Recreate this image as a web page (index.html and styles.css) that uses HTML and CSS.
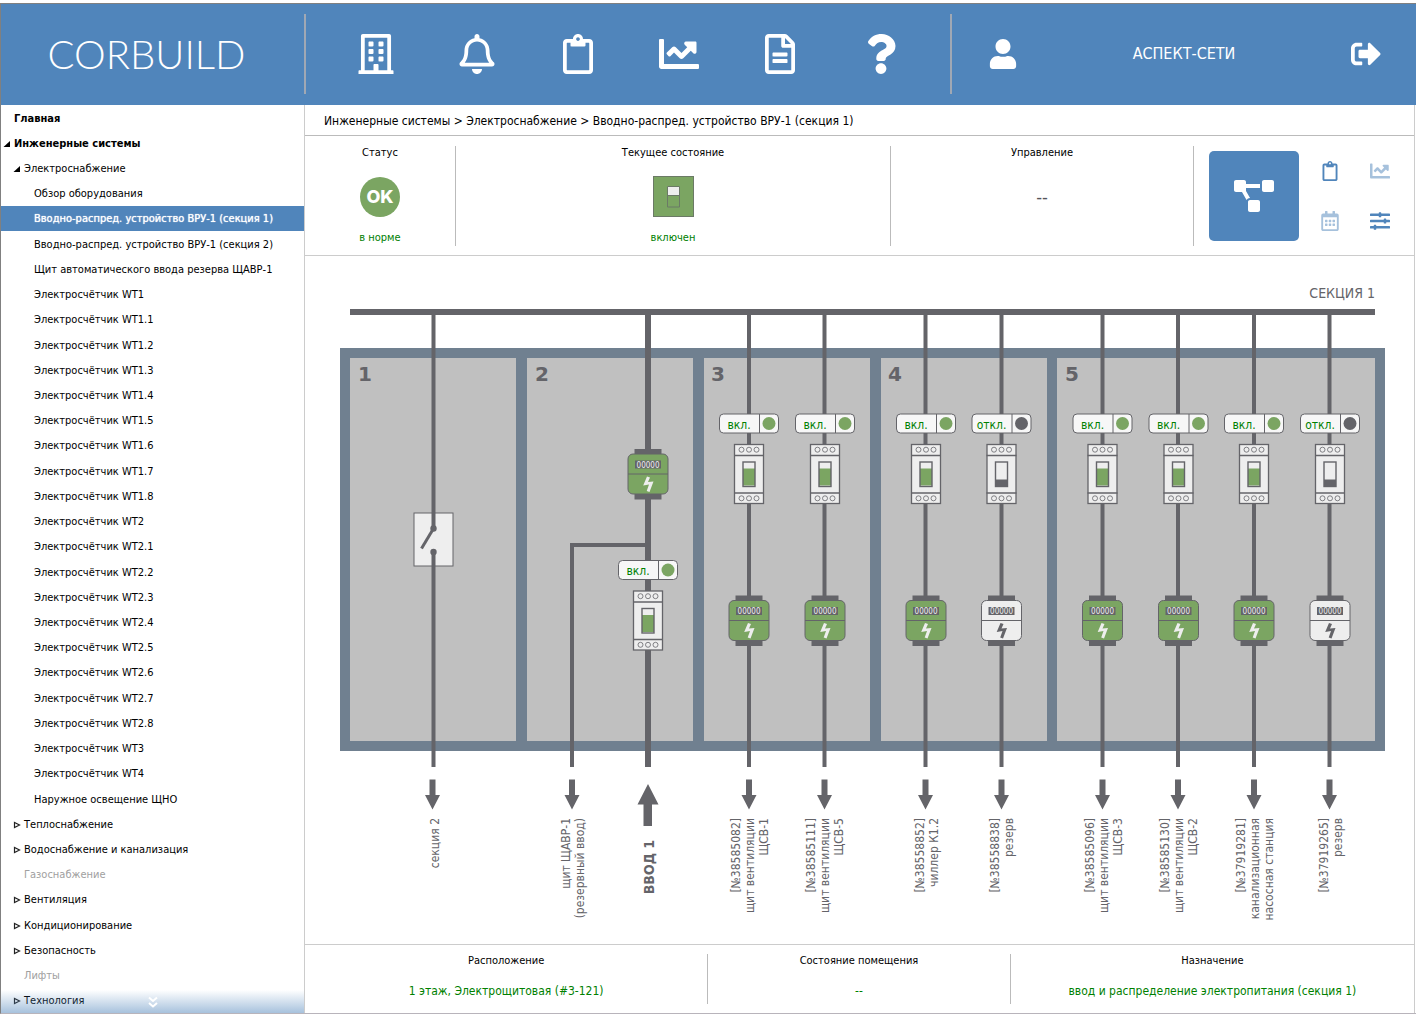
FILE: index.html
```html
<!DOCTYPE html>
<html lang="ru">

<head>
    <meta charset="UTF-8">
    <meta name="viewport" content="width=device-width, initial-scale=1.0">
    <title>CORBUILD</title>
    <link rel="stylesheet" href="styles.css">
</head>

<body>
    <!-- icons and diagram parts -->
    <svg class="sprite" width="0" height="0" aria-hidden="true">
        <defs>
            <symbol id="i-building" viewBox="0 0 448 512"><path d="M128 148v-40c0-6.600 5.400-12 12-12h40c6.600 0 12 5.400 12 12v40c0 6.600-5.400 12-12 12h-40c-6.600 0-12-5.400-12-12zm140 12h40c6.600 0 12-5.400 12-12v-40c0-6.600-5.400-12-12-12h-40c-6.600 0-12 5.400-12 12v40c0 6.600 5.400 12 12 12zm-128 96h40c6.600 0 12-5.400 12-12v-40c0-6.600-5.400-12-12-12h-40c-6.600 0-12 5.400-12 12v40c0 6.600 5.400 12 12 12zm128 0h40c6.600 0 12-5.400 12-12v-40c0-6.600-5.400-12-12-12h-40c-6.600 0-12 5.400-12 12v40c0 6.600 5.400 12 12 12zm-76 84v-40c0-6.600-5.400-12-12-12h-40c-6.600 0-12 5.400-12 12v40c0 6.600 5.400 12 12 12h40c6.600 0 12-5.400 12-12zm76 12h40c6.600 0 12-5.400 12-12v-40c0-6.600-5.400-12-12-12h-40c-6.600 0-12 5.400-12 12v40c0 6.600 5.400 12 12 12zm180 124v36H0v-36c0-6.600 5.400-12 12-12h19.500V24c0-13.300 10.700-24 24-24h337c13.300 0 24 10.700 24 24v440H436c6.600 0 12 5.400 12 12zM79.500 463H192v-67c0-6.600 5.400-12 12-12h40c6.600 0 12 5.400 12 12v67h112.500V49L80 48l-.5 415z"/></symbol>
            <symbol id="i-bell" viewBox="0 0 448 512"><path d="M439.390 362.290c-19.320-20.760-55.470-51.990-55.470-154.290 0-77.700-54.480-139.900-127.940-155.160V32c0-17.670-14.320-32-31.980-32s-31.980 14.330-31.980 32v20.840C118.560 68.100 64.080 130.300 64.080 208c0 102.300-36.150 133.530-55.470 154.290-6 6.450-8.660 14.160-8.610 21.710.11 16.400 12.980 32 32.100 32h383.800c19.120 0 32-15.600 32.100-32 .05-7.550-2.610-15.270-8.610-21.710zM67.530 368c21.220-27.970 44.420-74.330 44.530-159.420 0-.2-.06-.38-.06-.58 0-61.860 50.140-112 112-112s112 50.140 112 112c0 .2-.06.38-.06.58.11 85.100 23.310 131.460 44.530 159.420H67.530zM224 512c35.320 0 63.970-28.650 63.970-64H160.030c0 35.350 28.650 64 63.970 64z"/></symbol>
            <symbol id="i-clipboard" viewBox="0 0 384 512"><path d="M336 64h-80c0-35.300-28.700-64-64-64s-64 28.700-64 64H48C21.500 64 0 85.500 0 112v352c0 26.500 21.500 48 48 48h288c26.500 0 48-21.500 48-48V112c0-26.500-21.500-48-48-48zM192 40c13.300 0 24 10.700 24 24s-10.700 24-24 24-24-10.700-24-24 10.700-24 24-24zm144 418c0 3.300-2.700 6-6 6H54c-3.300 0-6-2.700-6-6V118c0-3.300 2.700-6 6-6h42v36c0 6.600 5.400 12 12 12h168c6.600 0 12-5.400 12-12v-36h42c3.300 0 6 2.700 6 6z"/></symbol>
            <symbol id="i-chart" viewBox="0 0 512 512"><path d="M496 384H64V80c0-8.840-7.160-16-16-16H16C7.160 64 0 71.160 0 80v336c0 17.670 14.330 32 32 32h464c8.840 0 16-7.160 16-16v-32c0-8.840-7.160-16-16-16zM464 96H345.940c-21.380 0-32.090 25.850-16.970 40.970l32.400 32.400L288 242.750l-73.370-73.370c-12.500-12.500-32.760-12.500-45.250 0l-68.690 68.690c-6.250 6.250-6.250 16.380 0 22.630l22.620 22.620c6.250 6.250 16.380 6.250 22.630 0L192 237.250l73.370 73.370c12.500 12.500 32.760 12.500 45.250 0l96-96 32.400 32.400c15.120 15.120 40.970 4.410 40.970-16.970V112c.01-8.840-7.150-16-15.990-16z"/></symbol>
            <symbol id="i-file" viewBox="0 0 384 512"><path d="M288 248v28c0 6.600-5.400 12-12 12H108c-6.600 0-12-5.400-12-12v-28c0-6.600 5.400-12 12-12h168c6.600 0 12 5.400 12 12zm-12 72H108c-6.600 0-12 5.400-12 12v28c0 6.600 5.400 12 12 12h168c6.600 0 12-5.400 12-12v-28c0-6.600-5.400-12-12-12zm108-188.100V464c0 26.500-21.500 48-48 48H48c-26.500 0-48-21.500-48-48V48C0 21.500 21.500 0 48 0h204.100C264.800 0 277 5.100 286 14.100L369.900 98c9 8.900 14.100 21.200 14.100 33.900zm-128-80V128h76.100L256 51.900zM336 464V176H232c-13.300 0-24-10.700-24-24V48H48v416h288z"/></symbol>
            <symbol id="i-question" viewBox="0 0 384 512"><path d="M202.021 0C122.202 0 70.503 32.703 29.914 91.026c-7.363 10.580-5.093 25.086 5.178 32.874l43.138 32.709c10.373 7.865 25.132 6.026 33.253-4.148 25.049-31.381 43.630-49.449 82.757-49.449 30.764 0 68.816 19.799 68.816 49.631 0 22.552-18.617 34.134-48.993 51.164-35.423 19.860-82.299 44.576-82.299 106.405V320c0 13.255 10.745 24 24 24h72.471c13.255 0 24-10.745 24-24v-5.773c0-42.860 125.268-44.645 125.268-160.627C377.504 66.256 286.902 0 202.021 0zM192 373.459c-38.196 0-69.271 31.075-69.271 69.271 0 38.195 31.075 69.270 69.271 69.270s69.271-31.075 69.271-69.271-31.075-69.270-69.271-69.270z"/></symbol>
            <symbol id="i-user" viewBox="0 0 448 512"><path d="M224 256c70.700 0 128-57.300 128-128S294.700 0 224 0 96 57.300 96 128s57.300 128 128 128zm89.600 32h-16.700c-22.200 10.200-46.900 16-72.900 16s-50.600-5.800-72.900-16h-16.700C60.200 288 0 348.200 0 422.400V464c0 26.500 21.500 48 48 48h352c26.500 0 48-21.500 48-48v-41.600c0-74.200-60.200-134.400-134.400-134.400z"/></symbol>
            <symbol id="i-exit" viewBox="0 0 512 512"><path d="M497 273L329 441c-15 15-41 4.500-41-17v-96H152c-13.300 0-24-10.700-24-24v-96c0-13.300 10.700-24 24-24h136V88c0-21.400 25.900-32 41-17l168 168c9.300 9.400 9.300 24.600 0 34zM192 436v-40c0-6.600-5.400-12-12-12H96c-17.700 0-32-14.300-32-32V160c0-17.700 14.300-32 32-32h84c6.600 0 12-5.400 12-12V76c0-6.600-5.400-12-12-12H96c-53 0-96 43-96 96v192c0 53 43 96 96 96h84c6.600 0 12-5.400 12-12z"/></symbol>
            <symbol id="i-diagram" viewBox="0 0 640 512"><path d="M384 320H256c-17.670 0-32 14.330-32 32v128c0 17.670 14.330 32 32 32h128c17.670 0 32-14.330 32-32V352c0-17.670-14.330-32-32-32zM192 32c0-17.670-14.330-32-32-32H32C14.330 0 0 14.330 0 32v128c0 17.670 14.330 32 32 32h95.720l73.160 128.040C211.980 300.980 232.400 288 256 288h.28L192 175.510V128h224V64H192V32zM608 0H480c-17.670 0-32 14.330-32 32v128c0 17.670 14.330 32 32 32h128c17.670 0 32-14.330 32-32V32c0-17.670-14.330-32-32-32z"/></symbol>
            <symbol id="i-calendar" viewBox="0 0 448 512"><path d="M148 288h-40c-6.600 0-12-5.400-12-12v-40c0-6.600 5.400-12 12-12h40c6.600 0 12 5.400 12 12v40c0 6.600-5.400 12-12 12zm108-12v-40c0-6.600-5.400-12-12-12h-40c-6.600 0-12 5.400-12 12v40c0 6.600 5.400 12 12 12h40c6.600 0 12-5.400 12-12zm96 0v-40c0-6.600-5.400-12-12-12h-40c-6.600 0-12 5.400-12 12v40c0 6.600 5.400 12 12 12h40c6.600 0 12-5.400 12-12zm-96 96v-40c0-6.600-5.400-12-12-12h-40c-6.600 0-12 5.400-12 12v40c0 6.600 5.400 12 12 12h40c6.600 0 12-5.400 12-12zm-96 0v-40c0-6.600-5.400-12-12-12h-40c-6.600 0-12 5.400-12 12v40c0 6.600 5.400 12 12 12h40c6.600 0 12-5.400 12-12zm192 0v-40c0-6.600-5.400-12-12-12h-40c-6.600 0-12 5.400-12 12v40c0 6.600 5.400 12 12 12h40c6.600 0 12-5.400 12-12zm96-260v352c0 26.500-21.500 48-48 48H48c-26.500 0-48-21.500-48-48V112c0-26.500 21.500-48 48-48h48V12c0-6.600 5.400-12 12-12h40c6.600 0 12 5.400 12 12v52h128V12c0-6.600 5.400-12 12-12h40c6.600 0 12 5.400 12 12v52h48c26.500 0 48 21.500 48 48zm-48 346V160H48v298c0 3.300 2.700 6 6 6h340c3.300 0 6-2.700 6-6z"/></symbol>
            <symbol id="i-sliders" viewBox="0 0 512 512"><path d="M496 384H160v-16c0-8.800-7.200-16-16-16h-32c-8.800 0-16 7.200-16 16v16H16c-8.800 0-16 7.200-16 16v32c0 8.800 7.200 16 16 16h80v16c0 8.800 7.200 16 16 16h32c8.800 0 16-7.200 16-16v-16h336c8.800 0 16-7.200 16-16v-32c0-8.800-7.200-16-16-16zm0-160h-80v-16c0-8.800-7.200-16-16-16h-32c-8.800 0-16 7.200-16 16v16H16c-8.800 0-16 7.200-16 16v32c0 8.800 7.200 16 16 16h336v16c0 8.800 7.200 16 16 16h32c8.800 0 16-7.200 16-16v-16h80c8.800 0 16-7.200 16-16v-32c0-8.800-7.200-16-16-16zm0-160H288V48c0-8.800-7.200-16-16-16h-32c-8.800 0-16 7.200-16 16v16H16C7.200 64 0 71.200 0 80v32c0 8.800 7.200 16 16 16h208v16c0 8.800 7.200 16 16 16h32c8.800 0 16-7.200 16-16v-16h208c8.800 0 16-7.200 16-16V80c0-8.800-7.200-16-16-16z"/></symbol>
            <symbol id="i-open" viewBox="0 0 8 8"><path d="M7 1v6H0.500z"/></symbol>
            <symbol id="i-closed" viewBox="0 0 8 8"><path d="M1.500 1.500v5L6.500 4z" fill="none" stroke="#222" stroke-width="1.200"/></symbol>
            <symbol id="i-more" viewBox="0 0 10 12"><path d="M1 1.500l4 3.500 4-3.500M1 7l4 3.500L9 7" fill="none" stroke="#fff" stroke-width="2"/></symbol>

            <g id="terminals">
                <rect x="-14.500" y="-29.500" width="29" height="59" fill="#eee" stroke="#646469" stroke-width="1.300"/>
                <path d="M-15-18.500h30M-15 19h30" stroke="#646469" stroke-width="1.300"/>
                <g fill="none" stroke="#646469" stroke-width=".8">
                    <circle cx="-7.500" cy="-24.300" r="2.500"/><circle cx="0" cy="-24.300" r="2.500"/><circle cx="7.500" cy="-24.300" r="2.500"/>
                    <circle cx="-7.500" cy="24.300" r="2.500"/><circle cx="0" cy="24.300" r="2.500"/><circle cx="7.500" cy="24.300" r="2.500"/>
                </g>
            </g>
            <g id="breaker-on">
                <use href="#terminals"/>
                <rect x="-6" y="-5.500" width="12" height="17" fill="#7ba562"/>
                <rect x="-6" y="-12" width="12" height="24.500" fill="none" stroke="#646469" stroke-width="1.400"/>
            </g>
            <g id="breaker-off">
                <use href="#terminals"/>
                <rect x="-6" y="5.500" width="12" height="6.500" fill="#646469"/>
                <rect x="-6" y="-12" width="12" height="24.500" fill="none" stroke="#646469" stroke-width="1.400"/>
            </g>
            <g id="meter">
                <path d="M-13.500-25.500h27v6h-27zM-13.500 19h27v6h-27z" fill="#646469"/>
                <rect x="-20" y="-20.500" width="40" height="40" rx="5" fill="currentColor" stroke="#646469"/>
                <path d="M-20-.5h40" stroke="#646469"/>
                <rect x="-13" y="-14" width="26" height="8" fill="#646469"/>
                <text class="digits" x="0" y="-7" text-anchor="middle">00000</text>
            </g>
            <path id="bolt" d="M-1 2l3 1-2 4.500 5.500-.5-4 10.500-2.800-1L1 10l-5.800 1z"/>
            <g id="meter-on" color="#7ba562">
                <use href="#meter"/>
                <use href="#bolt" fill="#eee"/>
            </g>
            <g id="meter-off" color="#eee">
                <use href="#meter"/>
                <use href="#bolt" fill="#646469"/>
            </g>
            <g id="badge">
                <rect x="-29.500" y="-9.500" width="59" height="19" rx="4" fill="#f7f7f7" stroke="#646469"/>
                <path d="M10.500-9.500v19" stroke="#646469"/>
                <circle cx="20" cy="0" r="6.500" fill="currentColor"/>
            </g>
            <g id="badge-on" color="#7ba562">
                <use href="#badge"/>
                <text class="state" x="-10" y="5" text-anchor="middle">вкл.</text>
            </g>
            <g id="badge-off" color="#646469">
                <use href="#badge"/>
                <text class="state" x="-10" y="5" text-anchor="middle">откл.</text>
            </g>
            <path id="arrow" d="M-3 0h6v15.500h4.500L0 30l-7.500-14.500H-3z" fill="#646469"/>
        </defs>
    </svg>

    <div class="app">
        <header class="top">
            <a class="logo" href="#">CORBUILD</a>
            <nav class="tools">
                <a href="#" aria-label="Здание"><svg class="icon"><use href="#i-building"/></svg></a>
                <a href="#" aria-label="События"><svg class="icon"><use href="#i-bell"/></svg></a>
                <a href="#" aria-label="Журнал"><svg class="icon"><use href="#i-clipboard"/></svg></a>
                <a href="#" aria-label="Графики"><svg class="icon"><use href="#i-chart"/></svg></a>
                <a href="#" aria-label="Документы"><svg class="icon"><use href="#i-file"/></svg></a>
                <a href="#" aria-label="Справка"><svg class="icon"><use href="#i-question"/></svg></a>
            </nav>
            <div class="account">
                <svg class="icon icon-md"><use href="#i-user"/></svg>
                <span>АСПЕКТ-СЕТИ</span>
                <button aria-label="Выход"><svg class="icon icon-md"><use href="#i-exit"/></svg></button>
            </div>
        </header>

        <div class="content">
            <nav class="side">
                <ul class="menu">
                    <li class="root"><a href="#">Главная</a></li>
                    <li class="root"><svg class="mark"><use href="#i-open"/></svg><a href="#">Инженерные системы</a></li>
                    <li class="group"><svg class="mark"><use href="#i-open"/></svg><a href="#">Электроснабжение</a></li>
                    <li class="leaf"><a href="#">Обзор оборудования</a></li>
                    <li class="leaf active"><a href="#">Вводно-распред. устройство ВРУ-1 (секция 1)</a></li>
                    <li class="leaf"><a href="#">Вводно-распред. устройство ВРУ-1 (секция 2)</a></li>
                    <li class="leaf"><a href="#">Щит автоматического ввода резерва ЩАВР-1</a></li>
                    <li class="leaf"><a href="#">Электросчётчик WT1</a></li>
                    <li class="leaf"><a href="#">Электросчётчик WT1.1</a></li>
                    <li class="leaf"><a href="#">Электросчётчик WT1.2</a></li>
                    <li class="leaf"><a href="#">Электросчётчик WT1.3</a></li>
                    <li class="leaf"><a href="#">Электросчётчик WT1.4</a></li>
                    <li class="leaf"><a href="#">Электросчётчик WT1.5</a></li>
                    <li class="leaf"><a href="#">Электросчётчик WT1.6</a></li>
                    <li class="leaf"><a href="#">Электросчётчик WT1.7</a></li>
                    <li class="leaf"><a href="#">Электросчётчик WT1.8</a></li>
                    <li class="leaf"><a href="#">Электросчётчик WT2</a></li>
                    <li class="leaf"><a href="#">Электросчётчик WT2.1</a></li>
                    <li class="leaf"><a href="#">Электросчётчик WT2.2</a></li>
                    <li class="leaf"><a href="#">Электросчётчик WT2.3</a></li>
                    <li class="leaf"><a href="#">Электросчётчик WT2.4</a></li>
                    <li class="leaf"><a href="#">Электросчётчик WT2.5</a></li>
                    <li class="leaf"><a href="#">Электросчётчик WT2.6</a></li>
                    <li class="leaf"><a href="#">Электросчётчик WT2.7</a></li>
                    <li class="leaf"><a href="#">Электросчётчик WT2.8</a></li>
                    <li class="leaf"><a href="#">Электросчётчик WT3</a></li>
                    <li class="leaf"><a href="#">Электросчётчик WT4</a></li>
                    <li class="leaf"><a href="#">Наружное освещение ЩНО</a></li>
                    <li class="group"><svg class="mark"><use href="#i-closed"/></svg><a href="#">Теплоснабжение</a></li>
                    <li class="group"><svg class="mark"><use href="#i-closed"/></svg><a href="#">Водоснабжение и канализация</a></li>
                    <li class="group disabled"><a>Газоснабжение</a></li>
                    <li class="group"><svg class="mark"><use href="#i-closed"/></svg><a href="#">Вентиляция</a></li>
                    <li class="group"><svg class="mark"><use href="#i-closed"/></svg><a href="#">Кондиционирование</a></li>
                    <li class="group"><svg class="mark"><use href="#i-closed"/></svg><a href="#">Безопасность</a></li>
                    <li class="group disabled"><a>Лифты</a></li>
                    <li class="group"><svg class="mark"><use href="#i-closed"/></svg><a href="#">Технология</a></li>
                </ul>
                <button class="more" aria-label="Прокрутить вниз"><svg width="10" height="12"><use href="#i-more"/></svg></button>
            </nav>

            <main class="panel">
                <div class="crumbs">
                    <a href="#">Инженерные системы</a> &gt; <a href="#">Электроснабжение</a> &gt; <a href="#">Вводно-распред. устройство ВРУ-1 (секция 1)</a>
                </div>

                <section class="status">
                    <div class="cell">
                        <h2>Статус</h2>
                        <div class="sign"><span class="ok">OK</span></div>
                        <p>в норме</p>
                    </div>
                    <div class="cell">
                        <h2>Текущее состояние</h2>
                        <div class="sign">
                            <svg width="41" height="41" viewBox="0 0 41 41">
                                <rect x=".5" y=".5" width="40" height="40" fill="#7ba562" stroke="#6b7a66"/>
                                <rect x="14.500" y="10.500" width="12" height="9" fill="#eee"/>
                                <path d="M14.500 10.500h12v20.500h-12zM14.500 19.500h12" fill="none" stroke="#6b7a66"/>
                            </svg>
                        </div>
                        <p>включен</p>
                    </div>
                    <div class="cell">
                        <h2>Управление</h2>
                        <div class="sign">--</div>
                    </div>
                    <div class="actions">
                        <button class="main-view" aria-label="Схема"><svg class="icon icon-md"><use href="#i-diagram"/></svg></button>
                        <div class="views">
                            <button aria-label="Журнал"><svg class="icon icon-sm"><use href="#i-clipboard"/></svg></button>
                            <button disabled aria-label="График"><svg class="icon icon-sm"><use href="#i-chart"/></svg></button>
                            <button disabled aria-label="Расписание"><svg class="icon icon-sm"><use href="#i-calendar"/></svg></button>
                            <button aria-label="Настройки"><svg class="icon icon-sm"><use href="#i-sliders"/></svg></button>
                        </div>
                    </div>
                </section>

                <svg class="scheme" viewBox="305 256 1109 688">
                    <text class="bus-name" x="1375" y="298" text-anchor="end">СЕКЦИЯ 1</text>

                    <!-- cabinet -->
                    <rect x="340" y="348" width="1045" height="403" fill="#708090"/>
                    <g fill="#c0c0c0">
                        <rect x="350" y="358" width="166" height="383"/>
                        <rect x="527" y="358" width="166" height="383"/>
                        <rect x="704" y="358" width="166" height="383"/>
                        <rect x="881" y="358" width="166" height="383"/>
                        <rect x="1057" y="358" width="318" height="383"/>
                    </g>
                    <g class="number">
                        <text x="358" y="381">1</text>
                        <text x="535" y="381">2</text>
                        <text x="711" y="381">3</text>
                        <text x="888" y="381">4</text>
                        <text x="1065" y="381">5</text>
                    </g>

                    <!-- bus and wires -->
                    <rect x="414" y="513" width="39" height="53" fill="#eee" stroke="#646469"/>
                    <g fill="none" stroke="#646469" stroke-width="4">
                        <path d="M350 312h1025M648 312v455" stroke-width="6"/>
                        <path d="M433.500 312v216M433.500 552v215M648 545h-76v222"/>
                        <path d="M749 312v455M824.500 312v455M925.500 312v455M1001.500 312v455"/>
                        <path d="M1102.500 312v455M1178 312v455M1254 312v455M1329.500 312v455"/>
                        <path d="M433.500 528.500l-12 20" stroke-width="3"/>
                    </g>
                    <circle cx="433.500" cy="528.500" r="3.200" fill="#646469"/>
                    <circle cx="433.500" cy="552" r="3.200" fill="#646469"/>

                    <!-- input -->
                    <use href="#meter-on" x="648" y="474.500"/>
                    <use href="#badge-on" x="648" y="570"/>
                    <use href="#breaker-on" x="648" y="620.500"/>

                    <!-- feeders -->
                    <use href="#badge-on" x="749" y="423.500"/><use href="#breaker-on" x="749" y="474"/><use href="#meter-on" x="749" y="621"/>
                    <use href="#badge-on" x="825" y="423.500"/><use href="#breaker-on" x="825" y="474"/><use href="#meter-on" x="825" y="621"/>
                    <use href="#badge-on" x="926" y="423.500"/><use href="#breaker-on" x="926" y="474"/><use href="#meter-on" x="926" y="621"/>
                    <use href="#badge-off" x="1001.500" y="423.500"/><use href="#breaker-off" x="1001.500" y="474"/><use href="#meter-off" x="1001.500" y="621"/>
                    <use href="#badge-on" x="1102.500" y="423.500"/><use href="#breaker-on" x="1102.500" y="474"/><use href="#meter-on" x="1102.500" y="621"/>
                    <use href="#badge-on" x="1178.500" y="423.500"/><use href="#breaker-on" x="1178.500" y="474"/><use href="#meter-on" x="1178.500" y="621"/>
                    <use href="#badge-on" x="1254" y="423.500"/><use href="#breaker-on" x="1254" y="474"/><use href="#meter-on" x="1254" y="621"/>
                    <use href="#badge-off" x="1330" y="423.500"/><use href="#breaker-off" x="1330" y="474"/><use href="#meter-off" x="1330" y="621"/>

                    <use href="#arrow" x="432.500" y="779.500"/>
                    <use href="#arrow" x="572" y="779.500"/>
                    <path d="M648 784l10.500 20.500H652V826h-8.500v-21.500h-6z" fill="#646469"/>
                    <use href="#arrow" x="749" y="779.500"/>
                    <use href="#arrow" x="824.500" y="779.500"/>
                    <use href="#arrow" x="925.500" y="779.500"/>
                    <use href="#arrow" x="1001.500" y="779.500"/>
                    <use href="#arrow" x="1102.500" y="779.500"/>
                    <use href="#arrow" x="1178" y="779.500"/>
                    <use href="#arrow" x="1254" y="779.500"/>
                    <use href="#arrow" x="1329.500" y="779.500"/>

                    <!-- captions, turned so that they read upwards -->
                    <g class="captions" transform="rotate(-90)" text-anchor="end">
                        <text x="-818" y="439">секция 2</text>
                        <text x="-818" y="570">щит ЩАВР-1</text>
                        <text x="-818" y="584">(резервный ввод)</text>
                        <text class="strong" x="-840" y="654">ВВОД 1</text>
                        <text x="-818" y="740">[№38585082]</text>
                        <text x="-818" y="754">щит вентиляции</text>
                        <text x="-818" y="768">ЩСВ-1</text>
                        <text x="-818" y="815">[№38585111]</text>
                        <text x="-818" y="829">щит вентиляции</text>
                        <text x="-818" y="843">ЩСВ-5</text>
                        <text x="-818" y="924">[№38558852]</text>
                        <text x="-818" y="938">чиллер К1.2</text>
                        <text x="-818" y="999">[№38558838]</text>
                        <text x="-818" y="1013">резерв</text>
                        <text x="-818" y="1094">[№38585096]</text>
                        <text x="-818" y="1108">щит вентиляции</text>
                        <text x="-818" y="1122">ЩСВ-3</text>
                        <text x="-818" y="1169">[№38585130]</text>
                        <text x="-818" y="1183">щит вентиляции</text>
                        <text x="-818" y="1197">ЩСВ-2</text>
                        <text x="-818" y="1245">[№37919281]</text>
                        <text x="-818" y="1259">канализационная</text>
                        <text x="-818" y="1273">насосная станция</text>
                        <text x="-818" y="1328">[№37919265]</text>
                        <text x="-818" y="1342">резерв</text>
                    </g>
                </svg>

                <footer class="place">
                    <div class="cell">
                        <h2>Расположение</h2>
                        <p>1 этаж, Электрощитовая (#3-121)</p>
                    </div>
                    <div class="cell">
                        <h2>Состояние помещения</h2>
                        <p>--</p>
                    </div>
                    <div class="cell">
                        <h2>Назначение</h2>
                        <p>ввод и распределение электропитания (секция 1)</p>
                    </div>
                </footer>
            </main>
        </div>
    </div>
</body>

</html>
```

FILE: styles.css
```css
* {
    box-sizing: border-box;
}

body {
    margin: 0;
    padding: 3px 1px 2px 0;
    background-color: #fff;
    color: #000;
    font-family: "DejaVu Sans Condensed", Tahoma, sans-serif;
    font-size: 11px;
    line-height: 14px;
}

a {
    color: inherit;
    text-decoration: none;
}

button {
    display: flex;
    align-items: center;
    justify-content: center;
    padding: 0;
    border: none;
    background: none;
    color: inherit;
    cursor: pointer;
}

h2,
p {
    margin: 0;
    font-size: 11px;
    font-weight: normal;
}

p {
    color: #008000;
}

.sprite {
    position: absolute;
}

.icon {
    width: 50px;
    height: 40px;
    fill: currentColor;
}

.icon-md {
    width: 40px;
    height: 30px;
}

.main-view .icon-md {
    height: 32px;
}

.icon-sm {
    width: 20px;
    height: 20px;
}

.app {
    border-top: 1px solid #808080;
    border-left: 1px solid #808080;
    border-bottom: 1px solid #b8b4bb;
}

/* header */
.top {
    display: grid;
    grid-template-columns: 303px 648fr 464fr;
    align-items: center;
    height: 101px;
    padding-bottom: 1px;
    background-color: #5085bb;
    color: #fff;
}

.logo {
    padding-right: 12px;
    font-family: Lato, sans-serif;
    font-size: 40px;
    font-weight: 300;
    line-height: 80px;
    text-align: center;
}

.tools {
    display: grid;
    grid-template-columns: repeat(6, 1fr);
    padding: 20px 19px;
    border-left: 2px solid #a0a8b4;
    border-right: 2px solid #a0a8b4;
}

.tools a {
    display: flex;
    justify-content: center;
}

.account {
    display: grid;
    grid-template-columns: 101px 1fr 101px;
    align-items: center;
    justify-items: center;
    font-size: 16px;
}

/* menu */
.content {
    display: flex;
    margin-right: 1px;
}

.side {
    position: relative;
    display: flex;
    width: 304px;
    border-right: 1px solid #ccc;
}

.menu {
    flex: 1;
    display: flex;
    flex-direction: column;
    margin: 0;
    padding: 0;
    list-style: none;
}

.menu li {
    flex: 1 0 20px;
    display: flex;
    align-items: center;
    gap: 3px;
    padding-top: 2px;
}

.mark {
    width: 8px;
    height: 8px;
    margin-left: -11px;
}

.root {
    padding-left: 13px;
    font-weight: bold;
}

.group {
    padding-left: 23px;
}

.leaf {
    padding-left: 33px;
}

.active {
    background-color: #5085bb;
    color: #fff;
    text-shadow: 0 0 1px #fff;
}

.disabled {
    color: #a0a0a0;
}

.more {
    position: absolute;
    left: 0;
    right: 0;
    bottom: 0;
    width: 100%;
    height: 23px;
    background: linear-gradient(rgba(80, 133, 187, 0), rgba(80, 133, 187, 0.5));
}

/* panel */
.panel {
    flex: 1;
    border-right: 1px solid #ccc;
}

.crumbs {
    padding: 9px 19px 7px;
    border-bottom: 1px solid #bbb;
    font-size: 12px;
}

.status {
    display: grid;
    grid-template-columns: 151fr 435fr 303fr 220px;
    padding: 10px 0 9px;
    border-bottom: 1px solid #ccc;
}

.cell {
    text-align: center;
    border-right: 1px solid #bbb;
}

.sign {
    display: flex;
    align-items: center;
    justify-content: center;
    height: 41px;
    margin: 16px 0 14px;
    font-size: 18px;
    color: #55555a;
}

.ok {
    width: 40px;
    border-radius: 20px;
    background-color: #7ba562;
    color: #fff;
    font-family: Inter, sans-serif;
    font-weight: 800;
    line-height: 40px;
}

.actions {
    display: flex;
    align-items: center;
    gap: 6px;
    padding-left: 15px;
}

.main-view {
    width: 90px;
    height: 90px;
    border-radius: 5px;
    background-color: #5085bb;
    color: #fff;
}

.views {
    display: grid;
    grid-template-columns: 50px 50px;
    grid-auto-rows: 50px;
    color: #5085bb;
}

.views button:disabled {
    opacity: 0.5;
}

.place {
    display: grid;
    grid-template-columns: 4fr 3fr 4fr;
    padding: 9px 0;
    border-top: 1px solid #ccc;
}

.place .cell:last-child {
    border-right: none;
}

.place p {
    padding: 16px 0 6px;
    font-size: 12px;
}

/* diagram */
.scheme {
    display: block;
    width: 100%;
    fill: #646469;
}

.captions {
    font-size: 12px;
}

.strong {
    font-size: 14px;
    font-weight: bold;
}

.number {
    font-family: "DejaVu Sans", sans-serif;
    font-size: 20px;
    font-weight: bold;
}

.bus-name {
    font-size: 14px;
}

.state {
    font-size: 12px;
    fill: #008000;
}

.digits {
    font-size: 8px;
    fill: #eee;
}
```
